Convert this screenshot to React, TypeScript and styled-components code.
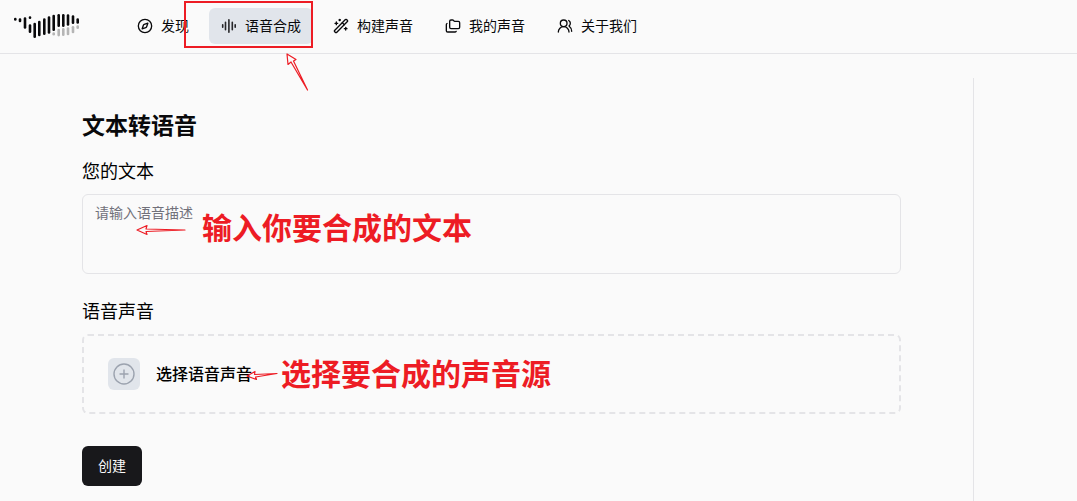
import React from "react";
import styled, { createGlobalStyle } from "styled-components";
import {
  CirclePlus,
  Compass,
  Folders,
  UsersRound,
  WandSparkles,
} from "lucide-react";

const red = "#ed1c24";
const line = "#e4e4e7";

const GlobalStyle = createGlobalStyle`
  *, *::before, *::after { box-sizing: border-box; }
  body {
    margin: 0;
    background: #fafafa;
    color: #09090b;
    font-family: "Noto Sans CJK SC", "Noto Sans", sans-serif;
    font-size: 14px;
    line-height: 20px;
  }
`;

const Page = styled.div`
  display: flex;
  flex-direction: column;
  min-height: 100vh;
`;

const Header = styled.header`
  display: flex;
  align-items: center;
  gap: 43px;
  padding: 8px 13px 9px;
  border-bottom: 1px solid ${line};
`;

const LogoLink = styled.a`
  display: flex;
  padding-top: 2px;
  color: #09090b;
`;

const Nav = styled.nav`
  display: flex;
  gap: 8px;
`;

const NavItem = styled.div`
  position: relative;
`;

const NavLink = styled.a<{ $active?: boolean }>`
  display: flex;
  align-items: center;
  gap: 8px;
  height: 36px;
  padding: 0 12px;
  border-radius: 6px;
  color: inherit;
  background: ${(p) => (p.$active ? "#e1e5eb" : "transparent")};
  text-decoration: none;
  white-space: nowrap;
`;

const NavText = styled.span`
  padding-bottom: 2px;
`;

const Main = styled.main`
  display: flex;
  flex: 1;
  padding-top: 24px;
`;

const Form = styled.form`
  display: flex;
  flex: 1;
  flex-direction: column;
  align-items: flex-start;
  padding: 30px 72px 15px 82px;
`;

const Side = styled.aside`
  width: 104px;
  border-left: 1px solid ${line};
`;

const Title = styled.h1`
  margin: 0 0 16px;
  font-size: 23px;
  font-weight: 700;
  line-height: 32px;
`;

const Label = styled.label`
  margin-bottom: 10px;
  color: #000;
  font-size: 18px;
  font-weight: 400;
  line-height: 28px;
`;

const Field = styled.div<{ $after: number }>`
  position: relative;
  width: 100%;
  margin-bottom: ${(p) => p.$after}px;
`;

const TextBox = styled.textarea`
  display: block;
  width: 100%;
  height: 80px;
  padding: 7px 12px;
  border: 1px solid ${line};
  border-radius: 6px;
  background: transparent;
  color: inherit;
  font: inherit;
  resize: none;
  &::placeholder {
    color: #71717a;
    opacity: 1;
  }
`;

const VoicePicker = styled.button`
  display: flex;
  align-items: center;
  gap: 16px;
  width: 100%;
  height: 80px;
  padding: 0 24px;
  border: 2px dashed ${line};
  border-radius: 6px;
  background: transparent;
  color: #000;
  font: inherit;
  font-size: 16px;
  font-weight: 500;
  cursor: pointer;
`;

const PickerText = styled.span`
  padding-bottom: 2px;
`;

const PlusTile = styled.span`
  display: flex;
  align-items: center;
  justify-content: center;
  width: 32px;
  height: 32px;
  border-radius: 6px;
  background: #e1e5eb;
  color: #9ca3af;
`;

const Submit = styled.button`
  height: 40px;
  padding: 0 16px 2px;
  border: 0;
  border-radius: 6px;
  background: #18181b;
  color: #fafafa;
  font: inherit;
  cursor: pointer;
`;

const Frame = styled.span`
  position: absolute;
  top: -7px;
  right: 0;
  bottom: -4px;
  left: -25px;
  border: 2px solid ${red};
  pointer-events: none;
`;

const Note = styled.strong<{ $top: number; $left: number }>`
  position: absolute;
  top: ${(p) => p.$top}px;
  left: ${(p) => p.$left}px;
  color: ${red};
  font-size: 30px;
  font-weight: 700;
  line-height: 40px;
  white-space: nowrap;
  pointer-events: none;
`;

const ArrowSvg = styled.svg<{ $top: number; $left: number }>`
  position: absolute;
  top: ${(p) => p.$top}px;
  left: ${(p) => p.$left}px;
  fill: none;
  stroke: ${red};
  stroke-width: 1.2;
  stroke-linejoin: round;
  pointer-events: none;
`;

function Arrow(props: { top: number; left: number; width: number; height: number; d: string }) {
  return (
    <ArrowSvg $top={props.top} $left={props.left} width={props.width} height={props.height} aria-hidden="true">
      <path d={props.d} />
    </ArrowSvg>
  );
}

function VoiceIcon() {
  return (
    <svg width="16" height="16" viewBox="0 0 16 16" stroke="#27272a" strokeWidth="1.6" strokeLinecap="round" aria-hidden="true">
      <path d="M1.700 6.700V9.300M4.500 4.200V11.800M7.900 1.700V14.300M11.300 4.200V11.800M14.200 6.700V9.300" />
    </svg>
  );
}

// Each bar: x, top, bottom
const darkBars = [
  [2.3, 4.7, 7.7], [7, 5.3, 9.3], [12, 4.3, 15.7], [17, 3.2, 6], [17, 11.3, 20],
  [21.7, 9.7, 25], [26.3, 7.7, 23.2], [31.3, 5.3, 22], [36, 3.3, 20.7], [40.7, 1.7, 18],
  [45.7, 1, 14], [50.3, 1, 14], [55, 1.3, 12.8], [60, 2.3, 11], [64.7, 5.3, 10.8],
];
const paleBars = [
  [40.7, 19.3, 22.5], [45.7, 15.8, 23.4], [50.3, 15, 23], [55, 14.3, 22.3], [60, 13, 20.3], [64.7, 12.2, 16],
];

function Logo() {
  return (
    <svg width="69" height="28" viewBox="0 0 69 28" strokeWidth="2.6" strokeLinecap="round" aria-hidden="true">
      <g stroke="#b5b5b5">
        {paleBars.map(([x, a, b]) => <path key={x} d={`M${x} ${a + 1.3}V${b - 1.3}`} />)}
      </g>
      <g stroke="currentColor">
        {darkBars.map(([x, a, b]) => <path key={`${x}-${a}`} d={`M${x} ${a + 1.3}V${b - 1.3}`} />)}
      </g>
    </svg>
  );
}

export default function App() {
  return (
    <>
      <GlobalStyle />
      <Page>
        <Header>
          <LogoLink href="#" aria-label="Home"><Logo /></LogoLink>
          <Nav>
            <NavItem>
              <NavLink href="#discover"><Compass size={16} /><NavText>发现</NavText></NavLink>
            </NavItem>
            <NavItem>
              <NavLink href="#speech" $active><VoiceIcon /><NavText>语音合成</NavText></NavLink>
              <Frame />
              <Arrow top={45} left={76} width={26} height={40} d="M2 1L3 11.500L6 9L22.500 37L8.500 8L11 6.500Z" />
            </NavItem>
            <NavItem>
              <NavLink href="#build"><WandSparkles size={16} /><NavText>构建声音</NavText></NavLink>
            </NavItem>
            <NavItem>
              <NavLink href="#voices"><Folders size={16} /><NavText>我的声音</NavText></NavLink>
            </NavItem>
            <NavItem>
              <NavLink href="#about"><UsersRound size={16} /><NavText>关于我们</NavText></NavLink>
            </NavItem>
          </Nav>
        </Header>
        <Main>
          <Form onSubmit={(e) => e.preventDefault()}>
            <Title>文本转语音</Title>
            <Label htmlFor="text">您的文本</Label>
            <Field $after={22}>
              <TextBox id="text" placeholder="请输入语音描述" />
              <Arrow top={30} left={54} width={52} height={12} d="M1 6L11 1.500L10 5L49 6L10 7.500L11 10.500Z" />
              <Note $top={12} $left={120}>输入你要合成的文本</Note>
            </Field>
            <Label htmlFor="voice">语音声音</Label>
            <Field $after={32}>
              <VoicePicker id="voice" type="button">
                <PlusTile><CirclePlus size={24} strokeWidth={1.4} /></PlusTile>
                <PickerText>选择语音声音</PickerText>
              </VoicePicker>
              <Arrow top={36} left={164} width={34} height={12} d="M1 6L9 1.500L8.500 4.500L31 3.500L9.500 7L10.500 9.500Z" />
              <Note $top={18} $left={199}>选择要合成的声音源</Note>
            </Field>
            <Submit type="submit">创建</Submit>
          </Form>
          <Side />
        </Main>
      </Page>
    </>
  );
}
